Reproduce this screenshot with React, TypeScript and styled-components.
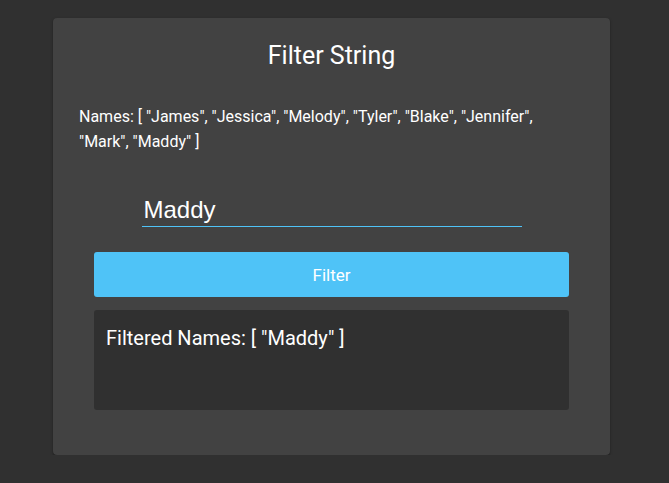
import React, { useState } from "react";
import styled, { createGlobalStyle } from "styled-components";

const Global = createGlobalStyle`
  html, body { margin: 0; padding: 0; background: #303030; }
  body { font-family: Roboto, "Noto Sans", Arial, sans-serif; color: #fff; }
  * { box-sizing: border-box; }
`;

const Page = styled.div`
  padding: 18px 0 0 53px;
`;

const Card = styled.div`
  width: 557px;
  background: #424242;
  border-radius: 4px;
  box-shadow: 0 1px 3px rgba(0, 0, 0, 0.3), 0 1px 1px rgba(0, 0, 0, 0.2);
  padding: 24px 26px 45px;
  display: flex;
  flex-direction: column;
  align-items: center;
`;

const Title = styled.h1`
  margin: 0;
  font-size: 25px;
  font-weight: 400;
  line-height: 28px;
  text-align: center;
`;

const Names = styled.p`
  align-self: stretch;
  margin: 34px 0 0;
  font-size: 16px;
  line-height: 25px;
`;

const Field = styled.input`
  margin-top: 40px;
  width: 380px;
  height: 33px;
  background: transparent;
  border: 0 solid #4fc3f7;
  border-bottom-width: 1px;
  outline: none;
  color: #fff;
  font-family: "Liberation Sans", Arial, sans-serif;
  font-size: 24px;
  padding: 0 2px;
`;

const Button = styled.button`
  margin-top: 25px;
  width: 475px;
  height: 45px;
  border: none;
  border-radius: 3px;
  background: #4fc3f7;
  color: #fff;
  font-family: Roboto, sans-serif;
  font-size: 17px;
  cursor: pointer;
`;

const Result = styled.div`
  margin-top: 13px;
  width: 475px;
  height: 100px;
  background: #303030;
  border-radius: 3px;
  padding: 15px 12px;
  font-size: 20px;
  line-height: 26px;
`;

const ALL = ["James", "Jessica", "Melody", "Tyler", "Blake", "Jennifer", "Mark", "Maddy"];
const fmt = (a: string[]) => `[ ${a.map((n) => `"${n}"`).join(", ")} ]`;

export default function App() {
  const [q, setQ] = useState("Maddy");
  const [res, setRes] = useState<string[]>(["Maddy"]);
  return (
    <>
      <Global />
      <Page>
        <Card>
          <Title>Filter String</Title>
          <Names>{`Names: ${fmt(ALL)}`}</Names>
          <Field value={q} onChange={(e) => setQ(e.target.value)} />
          <Button onClick={() => setRes(ALL.filter((n) => n.toLowerCase().includes(q.toLowerCase())))}>
            Filter
          </Button>
          <Result>{`Filtered Names: ${fmt(res)}`}</Result>
        </Card>
      </Page>
    </>
  );
}
